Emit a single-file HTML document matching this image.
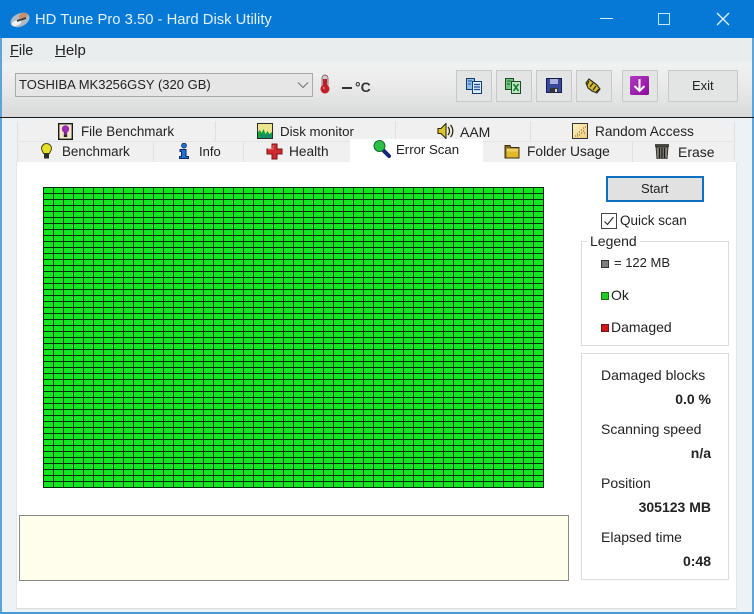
<!DOCTYPE html>
<html><head><meta charset="utf-8"><style>
html,body{margin:0;padding:0;background:#eef3f8}
#r{position:relative;width:754px;height:614px;overflow:hidden;background:#edf2f7;font-family:"Liberation Sans",sans-serif;font-size:14px;color:#222}
#r div,#r svg{position:absolute}
.t{white-space:nowrap;line-height:16px}
.btn{background:#e3e4e4;border:1px solid #c8c8c8;box-sizing:border-box;top:70px;height:32px}
.lb{left:601px;white-space:nowrap;line-height:16px}
.v{right:43px;font-weight:bold;white-space:nowrap;line-height:16px}
.d{background:#e0e0e0;width:1px}
</style></head><body><div id="r">
<div style="left:0;top:0;width:754px;height:38px;background:#0679d6"></div>
<svg style="left:9px;top:8px" width="22" height="22" viewBox="0 0 22 22"><ellipse cx="11" cy="12" rx="10" ry="6.500" fill="#aebbc4" transform="rotate(-25 11 12)"/><ellipse cx="7.500" cy="15" rx="5" ry="2.600" fill="#eef2f4" transform="rotate(-20 7.500 15)"/><ellipse cx="14" cy="8" rx="4.500" ry="3" fill="#c9906a" transform="rotate(-25 14 8)"/><path d="M8 13l9-3" stroke="#3c3c3c" stroke-width="1.800"/></svg>
<div class="t" style="left:35px;top:10px;font-size:14.8px;line-height:20px;color:#e3f1fc">HD Tune Pro 3.50 - Hard Disk Utility</div>
<div style="left:600px;top:18px;width:13px;height:1px;background:#d0eefb"></div>
<div style="left:658px;top:13px;width:10px;height:10px;border:1px solid #bfe8f8"></div>
<svg style="left:716px;top:12px" width="14" height="14" viewBox="0 0 14 14"><path d="M1 1L13 13M13 1L1 13" stroke="#e3f1fc" stroke-width="1.300"/></svg>

<div style="left:0;top:38px;width:754px;height:24px;background:#e9eded"></div>
<div style="left:0;top:62px;width:754px;height:55px;background:linear-gradient(#f0f1f1,#ececec 35%,#d9dada)"></div>
<div style="left:0;top:38px;width:2px;height:576px;background:#5ba5dc"></div>
<div style="left:752px;top:38px;width:2px;height:576px;background:#5ba5dc"></div>
<div class="t" style="left:10px;top:43px;font-size:14.500px"><u>F</u>ile</div>
<div class="t" style="left:55px;top:43px;font-size:15px"><u>H</u>elp</div>

<div style="left:15px;top:73px;width:298px;height:24px;box-sizing:border-box;border:1px solid #a9a9a9;background:#e6e6e6"></div>
<div class="t" style="left:19px;top:77px;font-size:13px">TOSHIBA MK3256GSY (320 GB)</div>
<svg style="left:297px;top:81px" width="12" height="8" viewBox="0 0 12 8"><path d="M1 1.500L6 6.500L11 1.500" fill="none" stroke="#777" stroke-width="1.100"/></svg>
<svg style="left:319px;top:74px" width="12" height="21" viewBox="0 0 12 21"><rect x="3" y="1" width="6" height="13" rx="3" fill="#d8c8c8" stroke="#6a4a4a" stroke-width=".7"/><rect x="4" y="5" width="4" height="9" fill="#c01f2a"/><circle cx="6" cy="15" r="4.500" fill="#c01f2a"/><circle cx="4.800" cy="14" r="1" fill="#e88"/></svg>
<div style="left:342px;top:87px;width:10px;height:1.500px;background:#333"></div>
<div class="t" style="left:355px;top:79px;font-weight:bold;font-size:14px;color:#333">°C</div>

<div class="btn" style="left:456px;width:36px"></div>
<div class="btn" style="left:496px;width:36px"></div>
<div class="btn" style="left:536px;width:36px"></div>
<div class="btn" style="left:576px;width:36px"></div>
<div class="btn" style="left:622px;width:36px"></div>
<div class="btn" style="left:668px;width:70px"></div>
<div class="t" style="left:692px;top:78px;font-size:13px">Exit</div>
<svg style="left:466px;top:78px" width="16" height="16" viewBox="0 0 16 16"><rect x=".5" y=".5" width="8" height="11" fill="#8cc0ee" stroke="#1c3a66"/><rect x="6.500" y="3.500" width="9" height="12" fill="#d8ecfb" stroke="#1c3a66"/><path d="M8 6.500h6M8 9h6M8 11.500h6" stroke="#1c4a8e" stroke-width="1.200"/><path d="M2 3h4M2 6h3" stroke="#1c4a8e"/></svg>
<svg style="left:505px;top:78px" width="16" height="16" viewBox="0 0 16 16"><rect x=".5" y=".5" width="8" height="11" fill="#6fc87a" stroke="#1f4a2a"/><rect x="6.500" y="3.500" width="9" height="12" fill="#bfe6c2" stroke="#1f4a2a"/><path d="M8.500 6l5 7M13.500 6l-5 7" stroke="#14802e" stroke-width="1.600"/><path d="M2 3h4M2 6h3" stroke="#14602a"/></svg>
<svg style="left:546px;top:78px" width="16" height="15" viewBox="0 0 16 15"><rect x=".5" y=".5" width="15" height="14" fill="#3a4899" stroke="#141c50"/><rect x="4" y="1" width="8" height="5" fill="#aab3dc"/><rect x="4" y="10" width="8" height="4.500" fill="#333"/><rect x="9" y="11" width="2" height="3" fill="#ddd"/></svg>
<svg style="left:585px;top:78px" width="16" height="16" viewBox="0 0 16 16"><path d="M1 5l3-4 4 3 4 3 3 4-3 4-5-2-4-3z" fill="#d4bc34" stroke="#2e2a10" stroke-width="1.100"/><path d="M4 3L2 7M8 5L5 9M11 8l-3 4M14 11l-3 3" stroke="#2e2a10" stroke-width="1.200"/></svg>
<svg style="left:630px;top:76px" width="19" height="19" viewBox="0 0 19 19"><defs><linearGradient id="g" x1="0" y1="0" x2="1" y2="1"><stop offset="0" stop-color="#b23ac4"/><stop offset="1" stop-color="#8a0c9a"/></linearGradient></defs><rect width="19" height="19" rx="1.500" fill="url(#g)"/><path d="M9.500 3v12M4.500 10l5 5 5-5" fill="none" stroke="#fff" stroke-width="2"/></svg>

<div style="left:0;top:117px;width:754px;height:1px;background:#1a1a1a"></div>
<div style="left:2px;top:118px;width:750px;height:494px;background:#edf2f7"></div>

<!-- tabs -->
<div style="left:17px;top:121px;width:717px;height:41px;background:#f0f0f0"></div>
<div style="left:17px;top:141px;width:717px;height:1px;background:#e4e4e4"></div>
<div class="d" style="left:17px;top:121px;height:41px"></div>
<div class="d" style="left:215px;top:121px;height:20px"></div>
<div class="d" style="left:395px;top:121px;height:20px"></div>
<div class="d" style="left:530px;top:121px;height:20px"></div>
<div class="d" style="left:734px;top:121px;height:41px"></div>
<div class="d" style="left:153px;top:142px;height:20px"></div>
<div class="d" style="left:243px;top:142px;height:20px"></div>
<div class="d" style="left:632px;top:142px;height:20px"></div>

<div style="left:16px;top:162px;width:721px;height:447px;background:#fff;border-right:1px solid #e2e6ea;border-bottom:1px solid #d8dcdf;border-left:1px solid #e2e6ea;box-sizing:border-box"></div>
<div style="left:350px;top:139px;width:133px;height:24px;background:#fff"></div>

<div class="t" style="left:81px;top:124px;font-size:13.400px">File Benchmark</div>
<div class="t" style="left:280px;top:124px;font-size:13.300px">Disk monitor</div>
<div class="t" style="left:460px;top:124px">AAM</div>
<div class="t" style="left:595px;top:124px;font-size:13.700px">Random Access</div>
<div class="t" style="left:62px;top:144px;font-size:13.400px">Benchmark</div>
<div class="t" style="left:199px;top:144px;font-size:13px">Info</div>
<div class="t" style="left:289px;top:144px;font-size:13.700px">Health</div>
<div class="t" style="left:396px;top:142px;font-size:13.200px">Error Scan</div>
<div class="t" style="left:527px;top:144px;font-size:13.800px">Folder Usage</div>
<div class="t" style="left:678px;top:144px">Erase</div>

<svg style="left:58px;top:123px" width="15" height="17" viewBox="0 0 15 17"><rect x=".7" y=".7" width="13.600" height="15.600" fill="#f5eac8" stroke="#1a1a1a" stroke-width="1.400"/><circle cx="7.500" cy="6" r="3.700" fill="#9a2cb4"/><rect x="5.800" y="9" width="3.400" height="3" fill="#7a2490"/><rect x="5.800" y="12" width="3.400" height="2" fill="#222"/></svg>
<svg style="left:257px;top:123px" width="16" height="16" viewBox="0 0 16 16"><rect x=".5" y=".5" width="15" height="15" fill="#efe48e" stroke="#2a2a2a"/><path d="M1 15V9l2-2 1.500 3 2-4 2 5 2-3 2 3 2.500-2v6z" fill="#14a03c"/><path d="M5 15v-4M9 15v-3M12 15v-4" stroke="#1b6ab8" stroke-width="1.200"/></svg>
<svg style="left:437px;top:123px" width="17" height="16" viewBox="0 0 17 16"><path d="M1 5.500h3l5-5v15l-5-5H1z" fill="#dcc62e" stroke="#2e2a0c" stroke-width="1.100"/><path d="M11 4c2 2 2 6 0 8M13.500 2c3 3 3 9 0 12" fill="none" stroke="#2e2a0c" stroke-width="1.300"/></svg>
<svg style="left:572px;top:123px" width="16" height="16" viewBox="0 0 16 16"><defs><linearGradient id="h" x1="0" y1="0" x2="1" y2="1"><stop offset="0" stop-color="#fbf3c8"/><stop offset="1" stop-color="#f2c878"/></linearGradient></defs><rect x=".5" y=".5" width="15" height="15" fill="url(#h)" stroke="#333"/><path d="M3 13h1M5 11h1M7 12h1M7 9h1M9 10h1M9 7h1M11 8h1M11 5h1M13 4h1M12 10h1M5 13h1" stroke="#7a5a20"/></svg>
<svg style="left:41px;top:143px" width="11" height="16" viewBox="0 0 11 16"><path d="M5.500.5a5 5 0 0 1 5 5c0 2-1.500 3-2 5h-6c-.5-2-2-3-2-5a5 5 0 0 1 5-5z" fill="#e6e02c" stroke="#4a480e"/><rect x="3" y="10.500" width="5" height="5" fill="#2e2e22"/></svg>
<svg style="left:179px;top:143px" width="10" height="16" viewBox="0 0 10 16"><circle cx="5" cy="2.600" r="2.500" fill="#1d72d8" stroke="#0a2a60" stroke-width=".7"/><path d="M1 6.500h6v7h2.500v2H.5v-2H2.500v-5H1z" fill="#1d72d8" stroke="#0a2a60"/></svg>
<svg style="left:266px;top:143px" width="17" height="17" viewBox="0 0 17 17"><path d="M6 1h5v5h5v5h-5v5H6v-5H1V6h5z" fill="#d02a30" stroke="#7a1414"/><path d="M7 2v4H2" fill="none" stroke="#ef7a7a"/></svg>
<svg style="left:373px;top:140px" width="18" height="18" viewBox="0 0 18 18"><path d="M9 9l7 7" stroke="#14287a" stroke-width="4" stroke-linecap="round"/><circle cx="6.500" cy="6" r="5.500" fill="#2cc04a" stroke="#146a28"/></svg>
<svg style="left:504px;top:143px" width="16" height="16" viewBox="0 0 16 16"><path d="M1 2.500h5l1 2h8v10.500H1z" fill="#7a6620" stroke="#3c300c"/><rect x="2.500" y="5.500" width="12" height="9" fill="#e0b82c"/><rect x="2.500" y="5.500" width="12" height="3" fill="#f0d060"/></svg>
<svg style="left:655px;top:143px" width="14" height="16" viewBox="0 0 14 16"><path d="M0 1h14v3H0z" fill="#4a4a44"/><path d="M1 4h12l-1 12H2z" fill="#8a867a" stroke="#1a1a1a" stroke-width=".8"/><path d="M4.500 5v10M7 5v10M9.500 5v10" stroke="#1a1a1a" stroke-width="1.300"/></svg>

<!-- grid -->
<div style="left:43px;top:187px;width:501px;height:301px;background-color:#12e81e;background-image:linear-gradient(to right,#032a06 1px,transparent 1px),linear-gradient(to bottom,#032a06 1px,transparent 1px);background-size:10px 6px"></div>

<div style="left:19px;top:515px;width:550px;height:66px;background:#fffdeb;border:1px solid #8a8a8a;box-sizing:border-box"></div>

<!-- right -->
<div style="left:606px;top:176px;width:98px;height:26px;background:#e1e1e1;border:2px solid #0f6fc0;box-sizing:border-box"></div>
<div class="t" style="left:641px;top:181px;font-size:13px">Start</div>
<div style="left:601px;top:213px;width:16px;height:16px;background:#fff;border:1px solid #444;box-sizing:border-box"></div>
<svg style="left:602px;top:214px" width="14" height="14" viewBox="0 0 14 14"><path d="M2.500 7.500L5.500 10.500L11.500 3" fill="none" stroke="#333" stroke-width="1.200"/></svg>
<div class="t" style="left:620px;top:213px;font-size:13.500px">Quick scan</div>

<div style="left:581px;top:241px;width:148px;height:105px;border:1px solid #dcdcdc;box-sizing:border-box"></div>
<div class="t" style="left:587px;top:233px;background:#fff;padding:0 3px">Legend</div>
<div style="left:601px;top:260px;width:8px;height:8px;background:#808080;border:1px solid #333;box-sizing:border-box"></div>
<div class="t" style="left:614px;top:255px;font-size:13px">= 122 MB</div>
<div style="left:601px;top:292px;width:8px;height:8px;background:#21cc21;border:1px solid #1a6a1a;box-sizing:border-box"></div>
<div class="t" style="left:611px;top:287px">Ok</div>
<div style="left:601px;top:324px;width:8px;height:8px;background:#d01818;border:1px solid #6a1a1a;box-sizing:border-box"></div>
<div class="t" style="left:611px;top:319px">Damaged</div>

<div style="left:581px;top:353px;width:148px;height:227px;border:1px solid #dcdcdc;box-sizing:border-box"></div>
<div class="lb" style="top:367px">Damaged blocks</div>
<div class="v" style="top:391px">0.0 %</div>
<div class="lb" style="top:421px">Scanning speed</div>
<div class="v" style="top:445px">n/a</div>
<div class="lb" style="top:475px">Position</div>
<div class="v" style="top:499px">305123 MB</div>
<div class="lb" style="top:529px">Elapsed time</div>
<div class="v" style="top:553px">0:48</div>
<div style="left:0;top:612px;width:754px;height:2px;background:#4a9ad4"></div>
</div></body></html>
